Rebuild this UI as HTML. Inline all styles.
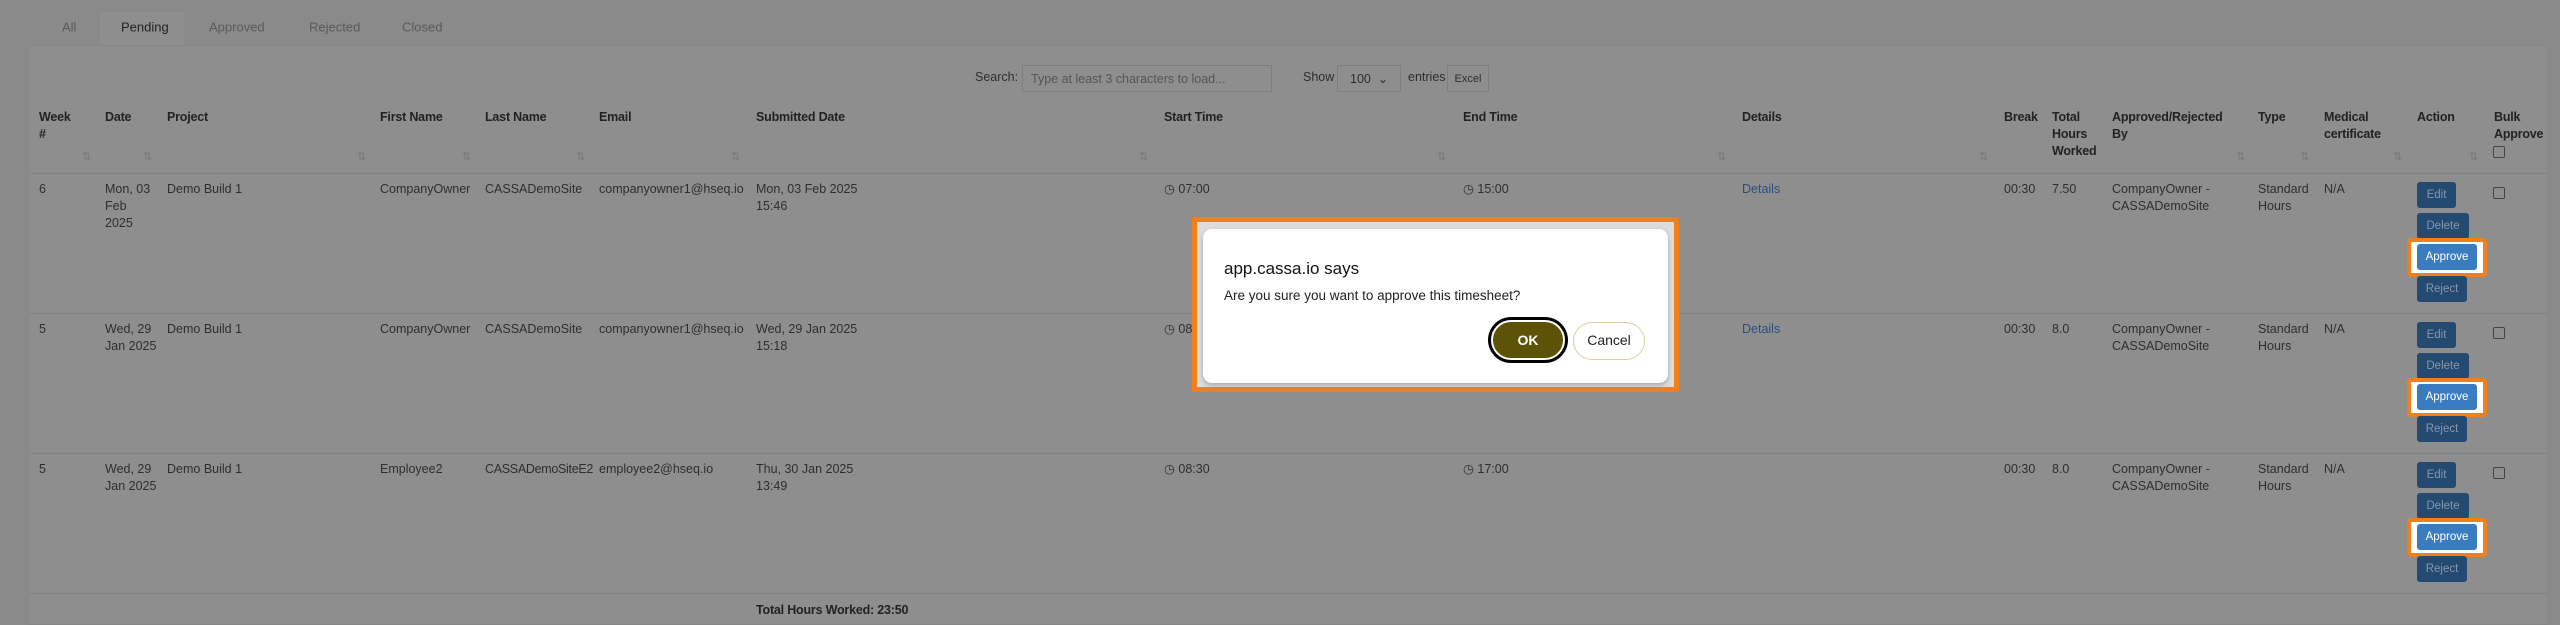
<!DOCTYPE html>
<html><head><meta charset="utf-8">
<style>
*{margin:0;padding:0;box-sizing:border-box}
body{width:2560px;height:615px;overflow:hidden;background:#8a8a8a;font-family:"Liberation Sans",sans-serif;font-size:12.5px;color:#2e2e2e;position:relative}
.a{position:absolute;white-space:nowrap;line-height:17px}
.h{font-weight:bold;color:#222;letter-spacing:-0.2px}
.tab{position:absolute;top:27px;transform:translateY(-50%);color:#5a5a5a;font-size:13px}
.panel{position:absolute;left:28px;top:45px;width:2520px;height:580px;background:#8e8e8e;border:1px solid #868686}
.line{position:absolute;left:30px;width:2518px;height:1px;background:#828282}
.s{position:absolute;color:#777;font-size:11px}
.btn{position:absolute;left:2417px;height:26px;background:#244a72;color:#8796aa;border-radius:3px;font-size:11.5px;line-height:26px;text-align:center}
.ap{position:absolute;left:2407px;width:80px;height:39px;border:4px solid #f07f1c;background:#fff;border-radius:4px}
.ap div{position:absolute;left:6px;top:2px;width:60px;height:26px;background:#3a7cc0;color:#fff;border-radius:3px;font-size:11.5px;line-height:26px;text-align:center}
.cb{position:absolute;left:2493px;width:12px;height:12px;border:1.5px solid #444;border-radius:2px}
.lk{color:#2b4f80}
</style></head><body>
<div style="position:absolute;left:98px;top:11px;width:88px;height:35px;background:#8e8e8e;border:1px solid #868686;border-bottom:none"></div>
<div class="tab" style="left:62px">All</div>
<div class="tab" style="left:121px;color:#222">Pending</div>
<div class="tab" style="left:209px">Approved</div>
<div class="tab" style="left:309px">Rejected</div>
<div class="tab" style="left:402px">Closed</div>
<div class="panel"></div>

<div class="a" style="left:975px;top:69px">Search:</div>
<div class="a" style="left:1022px;top:65px;width:250px;height:27px;border:1px solid #7e7e7e;padding:5px 8px;color:#555;line-height:17px">Type at least 3 characters to load...</div>
<div class="a" style="left:1303px;top:69px">Show</div>
<div class="a" style="left:1337px;top:65px;width:64px;height:27px;border:1px solid #7e7e7e;padding:5px 12px;line-height:17px">100 &nbsp;&#8964;</div>
<div class="a" style="left:1408px;top:69px">entries</div>
<div class="a" style="left:1447px;top:65px;width:42px;height:27px;border:1px solid #7e7e7e;font-size:11px;line-height:27px;text-align:center">Excel</div>

<div class="a h" style="left:39px;top:109px">Week<br>#</div>
<div class="a h" style="left:105px;top:109px">Date</div>
<div class="a h" style="left:167px;top:109px">Project</div>
<div class="a h" style="left:380px;top:109px">First Name</div>
<div class="a h" style="left:485px;top:109px">Last Name</div>
<div class="a h" style="left:599px;top:109px">Email</div>
<div class="a h" style="left:756px;top:109px">Submitted Date</div>
<div class="a h" style="left:1164px;top:109px">Start Time</div>
<div class="a h" style="left:1463px;top:109px">End Time</div>
<div class="a h" style="left:1742px;top:109px">Details</div>
<div class="a h" style="left:2004px;top:109px">Break</div>
<div class="a h" style="left:2052px;top:109px">Total<br>Hours<br>Worked</div>
<div class="a h" style="left:2112px;top:109px">Approved/Rejected<br>By</div>
<div class="a h" style="left:2258px;top:109px">Type</div>
<div class="a h" style="left:2324px;top:109px">Medical<br>certificate</div>
<div class="a h" style="left:2417px;top:109px">Action</div>
<div class="a h" style="left:2494px;top:109px">Bulk<br>Approve</div>
<div class="cb" style="top:146px"></div>

<div class="s" style="left:82px;top:150px">&#8645;</div>
<div class="s" style="left:143px;top:150px">&#8645;</div>
<div class="s" style="left:357px;top:150px">&#8645;</div>
<div class="s" style="left:462px;top:150px">&#8645;</div>
<div class="s" style="left:576px;top:150px">&#8645;</div>
<div class="s" style="left:731px;top:150px">&#8645;</div>
<div class="s" style="left:1139px;top:150px">&#8645;</div>
<div class="s" style="left:1437px;top:150px">&#8645;</div>
<div class="s" style="left:1717px;top:150px">&#8645;</div>
<div class="s" style="left:1979px;top:150px">&#8645;</div>
<div class="s" style="left:2236px;top:150px">&#8645;</div>
<div class="s" style="left:2300px;top:150px">&#8645;</div>
<div class="s" style="left:2393px;top:150px">&#8645;</div>
<div class="s" style="left:2469px;top:150px">&#8645;</div>
<div class="line" style="top:173px"></div>
<div class="line" style="top:313px"></div>
<div class="line" style="top:453px"></div>
<div class="line" style="top:593px"></div>

<!-- row 1 -->
<div class="a" style="left:39px;top:181px">6</div>
<div class="a" style="left:105px;top:181px">Mon, 03<br>Feb<br>2025</div>
<div class="a" style="left:167px;top:181px">Demo Build 1</div>
<div class="a" style="left:380px;top:181px">CompanyOwner</div>
<div class="a" style="left:485px;top:181px">CASSADemoSite</div>
<div class="a" style="left:599px;top:181px">companyowner1@hseq.io</div>
<div class="a" style="left:756px;top:181px">Mon, 03 Feb 2025<br>15:46</div>
<div class="a" style="left:1164px;top:181px">&#9719; 07:00</div>
<div class="a" style="left:1463px;top:181px">&#9719; 15:00</div>
<div class="a lk" style="left:1742px;top:181px">Details</div>
<div class="a" style="left:2004px;top:181px">00:30</div>
<div class="a" style="left:2052px;top:181px">7.50</div>
<div class="a" style="left:2112px;top:181px">CompanyOwner -<br>CASSADemoSite</div>
<div class="a" style="left:2258px;top:181px">Standard<br>Hours</div>
<div class="a" style="left:2324px;top:181px">N/A</div>
<div class="cb" style="top:187px"></div>
<div class="btn" style="top:182px;width:39px">Edit</div>
<div class="btn" style="top:213px;width:52px">Delete</div>
<div class="ap" style="top:238px"><div>Approve</div></div>
<div class="btn" style="top:276px;width:50px">Reject</div>

<!-- row 2 -->
<div class="a" style="left:39px;top:321px">5</div>
<div class="a" style="left:105px;top:321px">Wed, 29<br>Jan 2025</div>
<div class="a" style="left:167px;top:321px">Demo Build 1</div>
<div class="a" style="left:380px;top:321px">CompanyOwner</div>
<div class="a" style="left:485px;top:321px">CASSADemoSite</div>
<div class="a" style="left:599px;top:321px">companyowner1@hseq.io</div>
<div class="a" style="left:756px;top:321px">Wed, 29 Jan 2025<br>15:18</div>
<div class="a" style="left:1164px;top:321px">&#9719; 08:30</div>
<div class="a lk" style="left:1742px;top:321px">Details</div>
<div class="a" style="left:2004px;top:321px">00:30</div>
<div class="a" style="left:2052px;top:321px">8.0</div>
<div class="a" style="left:2112px;top:321px">CompanyOwner -<br>CASSADemoSite</div>
<div class="a" style="left:2258px;top:321px">Standard<br>Hours</div>
<div class="a" style="left:2324px;top:321px">N/A</div>
<div class="cb" style="top:327px"></div>
<div class="btn" style="top:322px;width:39px">Edit</div>
<div class="btn" style="top:353px;width:52px">Delete</div>
<div class="ap" style="top:378px"><div>Approve</div></div>
<div class="btn" style="top:416px;width:50px">Reject</div>

<!-- row 3 -->
<div class="a" style="left:39px;top:461px">5</div>
<div class="a" style="left:105px;top:461px">Wed, 29<br>Jan 2025</div>
<div class="a" style="left:167px;top:461px">Demo Build 1</div>
<div class="a" style="left:380px;top:461px">Employee2</div>
<div class="a" style="left:485px;top:461px;letter-spacing:-0.3px">CASSADemoSiteE2</div>
<div class="a" style="left:599px;top:461px">employee2@hseq.io</div>
<div class="a" style="left:756px;top:461px">Thu, 30 Jan 2025<br>13:49</div>
<div class="a" style="left:1164px;top:461px">&#9719; 08:30</div>
<div class="a" style="left:1463px;top:461px">&#9719; 17:00</div>
<div class="a" style="left:2004px;top:461px">00:30</div>
<div class="a" style="left:2052px;top:461px">8.0</div>
<div class="a" style="left:2112px;top:461px">CompanyOwner -<br>CASSADemoSite</div>
<div class="a" style="left:2258px;top:461px">Standard<br>Hours</div>
<div class="a" style="left:2324px;top:461px">N/A</div>
<div class="cb" style="top:467px"></div>
<div class="btn" style="top:462px;width:39px">Edit</div>
<div class="btn" style="top:493px;width:52px">Delete</div>
<div class="ap" style="top:518px"><div>Approve</div></div>
<div class="btn" style="top:556px;width:50px">Reject</div>

<div class="a h" style="left:756px;top:602px">Total Hours Worked: 23:50</div>

<!-- dialog -->
<div style="position:absolute;left:1192px;top:217px;width:487px;height:175px;border:5px solid #f07f1c;background:#dcdcdc">
  <div style="position:absolute;left:6px;top:7px;width:465px;height:154px;background:#fff;border-radius:9px;box-shadow:0 2px 4px rgba(0,0,0,.25)">
    <div class="a" style="left:21px;top:29px;font-size:17px;line-height:22px;color:#111">app.cassa.io says</div>
    <div class="a" style="left:21px;top:58px;font-size:13.5px;color:#222">Are you sure you want to approve this timesheet?</div>
    <div style="position:absolute;left:285px;top:88px;width:80px;height:46px;border-radius:23px;background:#000;padding:3px">
      <div style="width:74px;height:40px;border-radius:20px;border:2px solid #fff;background:#5c5308;color:#fff;font-weight:bold;font-size:14px;line-height:36px;text-align:center">OK</div>
    </div>
    <div style="position:absolute;left:370px;top:93px;width:72px;height:38px;border-radius:19px;border:1.5px solid #d8d39a;color:#222;font-size:14px;line-height:35px;text-align:center">Cancel</div>
  </div>
</div>
</body></html>
